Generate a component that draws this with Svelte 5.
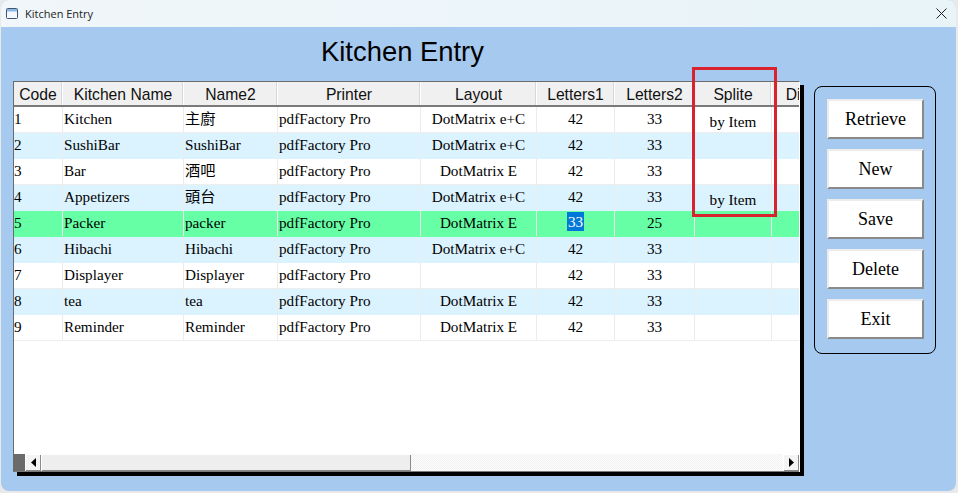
<script>
  const columns = [
    { key: 'code', label: 'Code', width: 49, cls: 'flush' },
    { key: 'name', label: 'Kitchen Name', width: 121, cls: 'left' },
    { key: 'name2', label: 'Name2', width: 94, cls: 'left' },
    { key: 'printer', label: 'Printer', width: 143, cls: 'left' },
    { key: 'layout', label: 'Layout', width: 116, cls: 'center' },
    { key: 'l1', label: 'Letters1', width: 78, cls: 'center' },
    { key: 'l2', label: 'Letters2', width: 80, cls: 'center' },
    { key: 'split', label: 'Splite', width: 77, cls: 'center' },
    { key: 'disp', label: 'Display', width: 80, cls: 'center' }
  ];

  const rows = [
    ['1', 'Kitchen', '主廚', 'pdfFactory Pro', 'DotMatrix e+C', '42', '33', 'by Item', ''],
    ['2', 'SushiBar', 'SushiBar', 'pdfFactory Pro', 'DotMatrix e+C', '42', '33', '', ''],
    ['3', 'Bar', '酒吧', 'pdfFactory Pro', 'DotMatrix E', '42', '33', '', ''],
    ['4', 'Appetizers', '頭台', 'pdfFactory Pro', 'DotMatrix e+C', '42', '33', 'by Item', ''],
    ['5', 'Packer', 'packer', 'pdfFactory Pro', 'DotMatrix E', '33', '25', '', ''],
    ['6', 'Hibachi', 'Hibachi', 'pdfFactory Pro', 'DotMatrix e+C', '42', '33', '', ''],
    ['7', 'Displayer', 'Displayer', 'pdfFactory Pro', '', '42', '33', '', ''],
    ['8', 'tea', 'tea', 'pdfFactory Pro', 'DotMatrix E', '42', '33', '', ''],
    ['9', 'Reminder', 'Reminder', 'pdfFactory Pro', 'DotMatrix E', '42', '33', '', '']
  ];

  const currentRow = 4;
  const actions = ['Retrieve', 'New', 'Save', 'Delete', 'Exit'];
  const template = columns.map((c) => c.width + 'px').join(' ');
</script>

<div class="window">
  <header class="titlebar">
    <svg class="app-icon" viewBox="0 0 12 11" width="12" height="11" aria-hidden="true">
      <rect x="0.5" y="0.5" width="11" height="10" rx="1" fill="#f4f8fc" stroke="#3f5670" />
      <rect x="1" y="1" width="10" height="2.5" fill="#8db8e6" />
    </svg>
    <span class="title-text">Kitchen Entry</span>
    <svg class="close" viewBox="0 0 11 11" width="11" height="11" aria-hidden="true">
      <path d="M0.5 0.5 L10.5 10.5 M10.5 0.5 L0.5 10.5" stroke="#222" stroke-width="1" fill="none" />
    </svg>
  </header>

  <div class="content">
    <h1>Kitchen Entry</h1>

    <div class="main">
      <div class="grid">
        <div class="viewport">
          <div class="head" style="grid-template-columns: {template}">
            {#each columns as col}
              <div class="hcell">{col.label}</div>
            {/each}
          </div>
          {#each rows as row, i}
            <div
              class="row"
              class:alt={i % 2 === 1}
              class:current={i === currentRow}
              style="grid-template-columns: {template}"
            >
              {#each row as value, j}
                <div class="cell {columns[j].cls}" class:low={columns[j].key === 'split'}>
                  {#if i === currentRow && j === 5}
                    <span class="selected">{value}</span>
                  {:else}
                    {value}
                  {/if}
                </div>
              {/each}
            </div>
          {/each}
        </div>

        <div class="scrollbar">
          <div class="corner"></div>
          <div class="arrow">
            <svg viewBox="0 0 5 9" width="5" height="9" aria-hidden="true"><path d="M5 0 V9 L0 4.5 Z" fill="#000" /></svg>
          </div>
          <div class="thumb"></div>
          <div class="track"></div>
          <div class="arrow">
            <svg viewBox="0 0 5 9" width="5" height="9" aria-hidden="true"><path d="M0 0 V9 L5 4.5 Z" fill="#000" /></svg>
          </div>
        </div>
      </div>

      <div class="actions">
        {#each actions as action}
          <button type="button">{action}</button>
        {/each}
      </div>
    </div>

    <div class="marker"></div>
  </div>
</div>

<style>
  :global(body) {
    margin: 0;
    background: #e9e9e9;
  }

  .window {
    position: relative;
    width: 955px;
    height: 491px;
    margin-left: 1px;
    background: #a6c9ef;
    border-radius: 8px;
    overflow: hidden;
    display: flex;
    flex-direction: column;
  }

  .titlebar {
    flex: none;
    height: 27px;
    background: linear-gradient(90deg, #f0f6fa, #e8f4f8);
    display: flex;
    align-items: center;
    padding: 0 9px 0 5px;
    font-family: 'Segoe UI', 'Open Sans', 'Noto Sans', sans-serif;
    font-size: 11px;
    color: #222;
  }

  .app-icon {
    margin-right: 7px;
  }

  .title-text {
    flex: 1;
  }

  .content {
    position: relative;
    flex: 1;
    padding: 0 12px;
  }

  h1 {
    margin: 0;
    height: 54px;
    padding: 9px 0 0 308px;
    box-sizing: border-box;
    font: 400 27.4px/32px 'Liberation Sans', Arial, sans-serif;
    color: #000;
  }

  .main {
    display: flex;
    align-items: flex-start;
    gap: 14px;
  }

  .grid {
    width: 787px;
    height: 391px;
    box-sizing: border-box;
    border: 1px solid #6b6b6b;
    border-right-color: #fff;
    border-bottom: none;
    background: #fff;
    box-shadow: 4px 4px 0 #000;
    display: flex;
    flex-direction: column;
  }

  .viewport {
    flex: 1;
    overflow: hidden;
    min-height: 0;
  }

  .head {
    display: grid;
    width: max-content;
    height: 25px;
    background: #f0f0f0;
    border-bottom: 2px solid #7a7a7a;
    box-sizing: border-box;
  }

  .hcell {
    border-right: 1px solid #fff;
    box-shadow: inset -1px 0 0 #d8d8d8;
    text-align: center;
    font: 400 15.7px/25px 'Liberation Sans', Arial, sans-serif;
    color: #111;
    overflow: hidden;
    white-space: nowrap;
  }

  .row {
    display: grid;
    width: max-content;
    height: 26px;
    background: #fff;
    box-sizing: border-box;
    border-bottom: 1px solid #eeeeee;
  }

  .row.alt {
    background: #dbf2ff;
    border-bottom-color: #dbf2ff;
  }

  .row.current {
    background: #66ffa6;
    border-bottom-color: #66ffa6;
  }

  .cell {
    border-right: 1px solid #ececec;
    font: 400 15.2px/24px 'Liberation Serif', 'Noto Sans CJK TC', serif;
    color: #000;
    white-space: nowrap;
    overflow: hidden;
  }

  .cell.left {
    padding-left: 1px;
  }

  .cell.center {
    text-align: center;
  }

  .cell.low {
    line-height: 29px;
  }

  .selected {
    display: inline-block;
    background: #0078d7;
    color: #fff;
    padding: 0 1px;
    line-height: 19px;
    vertical-align: 1px;
  }

  .scrollbar {
    flex: none;
    height: 18px;
    display: flex;
    background: #fff;
    border-bottom: 1px solid #7a7a7a;
    box-sizing: border-box;
  }

  .corner {
    width: 11px;
    background: #6b6b6b;
  }

  .arrow {
    width: 16px;
    flex: none;
    display: flex;
    align-items: center;
    justify-content: center;
    background: #f4f4f4;
    box-shadow: inset 1px 1px 0 #fff, inset -1px -1px 0 #8a8a8a;
  }

  .thumb {
    width: 370px;
    flex: none;
    background: #eeeeee;
    box-shadow: inset 1px 1px 0 #fff, inset -1px -1px 0 #8a8a8a;
  }

  .track {
    flex: 1;
    background: repeating-conic-gradient(#f0f0f0 0 25%, #fff 0 50%) 0 0 / 2px 2px;
  }

  .actions {
    width: 122px;
    height: 268px;
    margin-top: 5px;
    box-sizing: border-box;
    border: 1px solid #000;
    border-radius: 8px;
    padding: 12px 12px;
    display: flex;
    flex-direction: column;
    gap: 10px;
  }

  button {
    width: 97px;
    height: 40px;
    padding: 0;
    background: #fff;
    border: 2px solid;
    border-color: #ececec #8a8a8a #8a8a8a #ececec;
    font: 400 18px 'Liberation Serif', serif;
    color: #000;
  }

  .marker {
    position: absolute;
    left: 691px;
    top: 40px;
    width: 85px;
    height: 150px;
    box-sizing: border-box;
    border: 3px solid #d8232f;
    pointer-events: none;
  }
</style>
